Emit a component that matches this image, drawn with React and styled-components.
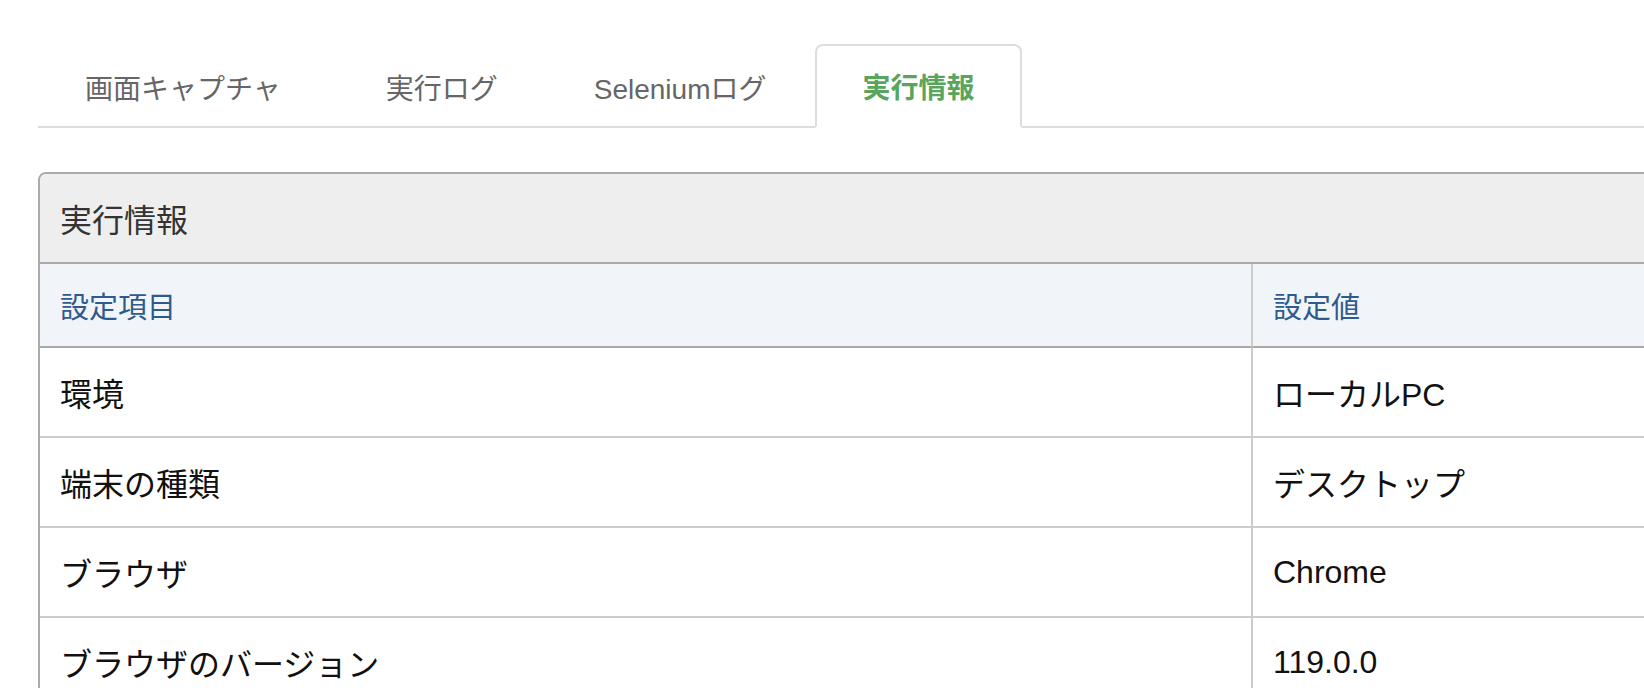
import React from "react";
import styled, { createGlobalStyle } from "styled-components";

const GlobalStyle = createGlobalStyle`
  html, body {
    margin: 0;
    padding: 0;
    background: #fff;
    overflow: hidden;
  }
  body {
    font-family: "Liberation Sans", "Noto Sans CJK JP", sans-serif;
    color: #111;
  }
`;

const Page = styled.div`
  width: 1700px;
  padding: 44px 0 0 38px;
  box-sizing: border-box;
`;

const TabBar = styled.div`
  display: flex;
  height: 82px;
  border-bottom: 2px solid #ddd;
`;

const Tab = styled.div`
  display: flex;
  align-items: center;
  box-sizing: border-box;
  height: 84px;
  margin-bottom: -2px;
  margin-right: ${(p) => p.gap || 0}px;
  padding: 0 45px;
  font-size: 28px;
  color: ${(p) => (p.active ? "#5aa55e" : "#666")};
  font-weight: ${(p) => (p.active ? 700 : 400)};
  background: ${(p) => (p.active ? "#fff" : "transparent")};
  border: 2px solid ${(p) => (p.active ? "#ddd" : "transparent")};
  border-bottom: ${(p) => (p.active ? "2px solid #fff" : "none")};
  border-radius: 8px 8px 0 0;
  cursor: pointer;
`;

const Panel = styled.div`
  margin-top: 44px;
  border: 2px solid #aaa;
  border-radius: 8px;
  overflow: hidden;
`;

const PanelHeading = styled.div`
  display: flex;
  align-items: center;
  height: 88px;
  padding-left: 20px;
  background: #eee;
  border-bottom: 2px solid #aaa;
  font-size: 32px;
  color: #333;
`;

const Table = styled.table`
  width: 100%;
  border-collapse: separate;
  border-spacing: 0;
  table-layout: fixed;
`;

const HeadCell = styled.th`
  box-sizing: border-box;
  height: 84px;
  padding: 0 20px;
  text-align: left;
  font-weight: 400;
  font-size: 29px;
  color: #2f5a8c;
  background: #f1f5fa;
  border-bottom: 2px solid #aaa;
  border-right: ${(p) => (p.first ? "2px solid #ccc" : "none")};
  width: ${(p) => (p.first ? "1213px" : "auto")};
`;

const Cell = styled.td`
  box-sizing: border-box;
  height: 90px;
  padding: 0 20px;
  font-size: 32px;
  color: #111;
  border-bottom: 2px solid #ccc;
  border-right: ${(p) => (p.first ? "2px solid #ccc" : "none")};
`;

const tabs = [
  { label: "画面キャプチャ", gap: 11 },
  { label: "実行ログ", gap: 2 },
  { label: "Seleniumログ", gap: 2 },
  { label: "実行情報", active: true },
];

const rows = [
  ["環境", "ローカルPC"],
  ["端末の種類", "デスクトップ"],
  ["ブラウザ", "Chrome"],
  ["ブラウザのバージョン", "119.0.0"],
];

export default function App() {
  return (
    <>
      <GlobalStyle />
      <Page>
        <TabBar>
          {tabs.map((t) => (
            <Tab key={t.label} active={t.active} gap={t.gap}>
              {t.label}
            </Tab>
          ))}
        </TabBar>
        <Panel>
          <PanelHeading>実行情報</PanelHeading>
          <Table>
            <thead>
              <tr>
                <HeadCell first>設定項目</HeadCell>
                <HeadCell>設定値</HeadCell>
              </tr>
            </thead>
            <tbody>
              {rows.map(([k, v]) => (
                <tr key={k}>
                  <Cell first>{k}</Cell>
                  <Cell>{v}</Cell>
                </tr>
              ))}
            </tbody>
          </Table>
        </Panel>
      </Page>
    </>
  );
}
